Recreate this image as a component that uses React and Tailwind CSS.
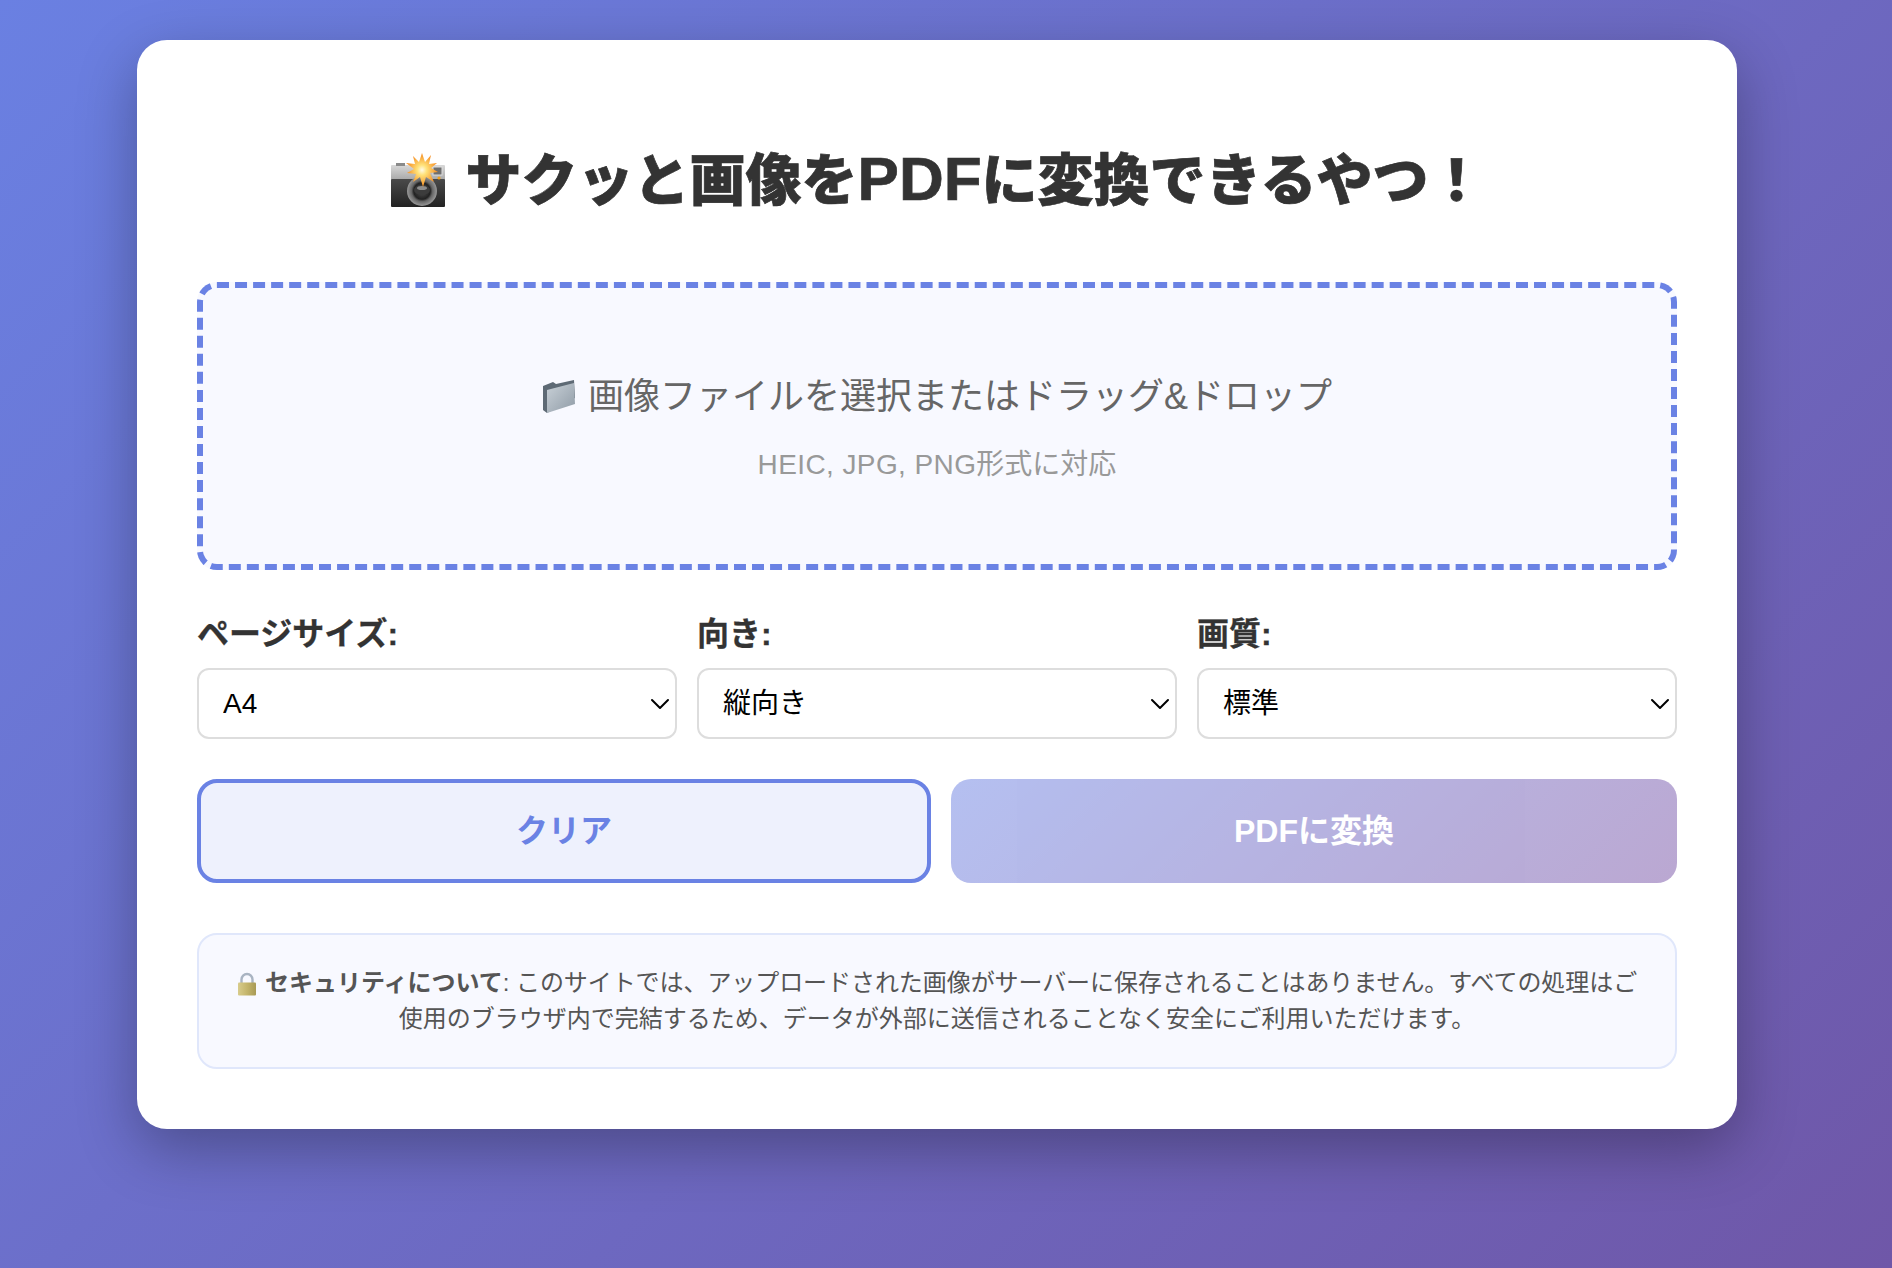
import { ChevronDown } from 'lucide-react'

const FONT = "font-['Liberation_Sans','Noto_Sans_CJK_JP',sans-serif]"

const SELECTS = [
  { label: 'ページサイズ:', options: ['A4', 'A3', 'Letter'] },
  { label: '向き:', options: ['縦向き', '横向き'] },
  { label: '画質:', options: ['標準', '高画質'] },
]

function CameraFlash() {
  return (
    <svg viewBox="0 0 56 56" className="inline-block w-[56px] h-[56px] align-[-9px] mr-[20px]">
      <defs>
        <linearGradient id="camTop" x1="0" y1="0" x2="0" y2="1">
          <stop offset="0" stopColor="#d8d8d8" />
          <stop offset="1" stopColor="#a8a8a8" />
        </linearGradient>
        <linearGradient id="camBody" x1="0" y1="0" x2="0" y2="1">
          <stop offset="0" stopColor="#4a4a4a" />
          <stop offset="1" stopColor="#222" />
        </linearGradient>
        <radialGradient id="camLens">
          <stop offset="0" stopColor="#555" />
          <stop offset="0.55" stopColor="#222" />
          <stop offset="0.7" stopColor="#666" />
          <stop offset="1" stopColor="#999" />
        </radialGradient>
        <radialGradient id="camFlash">
          <stop offset="0" stopColor="#fffbe8" />
          <stop offset="0.3" stopColor="#ffe27a" />
          <stop offset="1" stopColor="#f58a1f" />
        </radialGradient>
      </defs>
      <rect x="1" y="12" width="54" height="15" rx="1" fill="url(#camTop)" />
      <rect x="1" y="26" width="54" height="28" rx="1" fill="url(#camBody)" />
      <rect x="6" y="10" width="9" height="3" fill="#8a8a8a" />
      <rect x="43" y="14" width="9" height="8" fill="#6f6f6f" stroke="#ddd" strokeWidth="1" />
      <circle cx="49" cy="25" r="1.6" fill="#f2a21e" />
      <circle cx="32" cy="38" r="15" fill="url(#camLens)" />
      <ellipse cx="32" cy="37" rx="8" ry="5" fill="#3c3c3c" />
      <ellipse cx="32" cy="35" rx="5" ry="2" fill="#8d8d8d" />
      <polygon
        points="32,0 35,9 41,2 39,11 47,10 41,15 48,19 40,20 44,29 36,24 33,34 30,24 23,29 26,21 17,20 24,16 16,10 25,11 23,3 29,9"
        fill="url(#camFlash)"
      />
    </svg>
  )
}

function Folder() {
  return (
    <svg viewBox="0 0 34 34" className="inline-block w-[34px] h-[34px] align-[-5px] mr-[12px]">
      <defs>
        <linearGradient id="folderFront" x1="0" y1="0" x2="1" y2="1">
          <stop offset="0" stopColor="#c9d1d8" />
          <stop offset="1" stopColor="#8f9ba6" />
        </linearGradient>
      </defs>
      <path d="M1 6 L11 2 L14 4 L32 0 L33 18 L5 33 L1 30 Z" fill="#5e6a75" />
      <path d="M5 10 L32 3 L33 24 L5 33 Z" fill="url(#folderFront)" />
    </svg>
  )
}

function Lock() {
  return (
    <svg viewBox="0 0 20 24" className="inline-block w-[20px] h-[24px] align-[-5px] mr-[8px]">
      <defs>
        <linearGradient id="lockBody" x1="0" y1="0" x2="1" y2="0">
          <stop offset="0" stopColor="#d8cc8c" />
          <stop offset="0.5" stopColor="#c4b56c" />
          <stop offset="1" stopColor="#a89a55" />
        </linearGradient>
      </defs>
      <path d="M4.5 11 V7.5 a5.5 5.5 0 0 1 11 0 V11" fill="none" stroke="#a9b4c2" strokeWidth="2.4" />
      <rect x="1" y="10.5" width="18" height="13" rx="1" fill="url(#lockBody)" />
    </svg>
  )
}

function SelectField({ label, options }) {
  return (
    <div>
      <label className="block text-[32px] leading-[48px] font-bold text-[#333] mb-[10px] [-webkit-text-stroke:0.3px_#333]">
        {label}
      </label>
      <div className="relative">
        <select className="block w-full h-[71px] appearance-none bg-white border-2 border-[#ddd] rounded-[12px] pl-[24px] pr-[40px] text-[28px] text-black">
          {options.map((o) => (
            <option key={o}>{o}</option>
          ))}
        </select>
        <ChevronDown
          size={32}
          strokeWidth={1.5}
          className="absolute right-[1px] top-[20px] text-black pointer-events-none"
        />
      </div>
    </div>
  )
}

export default function App() {
  return (
    <div className={`${FONT} min-h-[1268px] bg-linear-[135deg,#6a80e2,#6f57a8] pt-[40px] pl-[137px]`}>
      <div className="w-[1600px] bg-white rounded-[30px] shadow-[0_20px_60px_rgba(0,0,0,0.3)] p-[60px]">
        <h1 className="mt-[41px] mb-[61px] text-center text-[56px] leading-[80px] font-extrabold text-[#333] [-webkit-text-stroke:0.7px_#333]">
          <CameraFlash />
          サクッと画像を<span className="text-[62px] leading-none">PDF</span>に変換できるやつ！
        </h1>

        <div className="border-[6px] border-dashed border-[#6a82e4] rounded-[20px] bg-[#f8f9ff] pt-[82px] pb-[78px] text-center">
          <p className="text-[36px] leading-[54px] text-[#666]">
            <Folder />
            画像ファイルを選択またはドラッグ&ドロップ
          </p>
          <p className="mt-[20px] text-[28px] leading-[42px] text-[#999]">
            <span className="tracking-[0.4px]">HEIC, JPG, PNG</span>形式に対応
          </p>
        </div>

        <div className="grid grid-cols-3 gap-[20px] mt-[40px]">
          {SELECTS.map((s) => (
            <SelectField key={s.label} label={s.label} options={s.options} />
          ))}
        </div>

        <div className="flex gap-[20px] mt-[40px]">
          <button className="flex-1 h-[104px] border-4 border-[#6a82e4] bg-[#eef1fd] rounded-[20px] text-[32px] font-bold text-[#6a82e4]">
            クリア
          </button>
          <button className="flex-1 h-[104px] rounded-[20px] bg-linear-[135deg,#6a80e2,#7650a4] opacity-50 text-[32px] font-bold text-white">
            PDFに変換
          </button>
        </div>

        <div className="mt-[50px] border-2 border-[#e0e7fb] bg-[#f8f9ff] rounded-[20px] py-[30px] px-[30px] text-center text-[24px] leading-[36px] text-[#555]">
          <Lock />
          <strong>セキュリティについて</strong>
          <span className="tracking-[-0.07px]">: このサイトでは、アップロードされた画像がサーバーに保存されることはありません。すべての処理はご</span>
          <br />
          使用のブラウザ内で完結するため、データが外部に送信されることなく安全にご利用いただけます。
        </div>
      </div>
    </div>
  )
}
